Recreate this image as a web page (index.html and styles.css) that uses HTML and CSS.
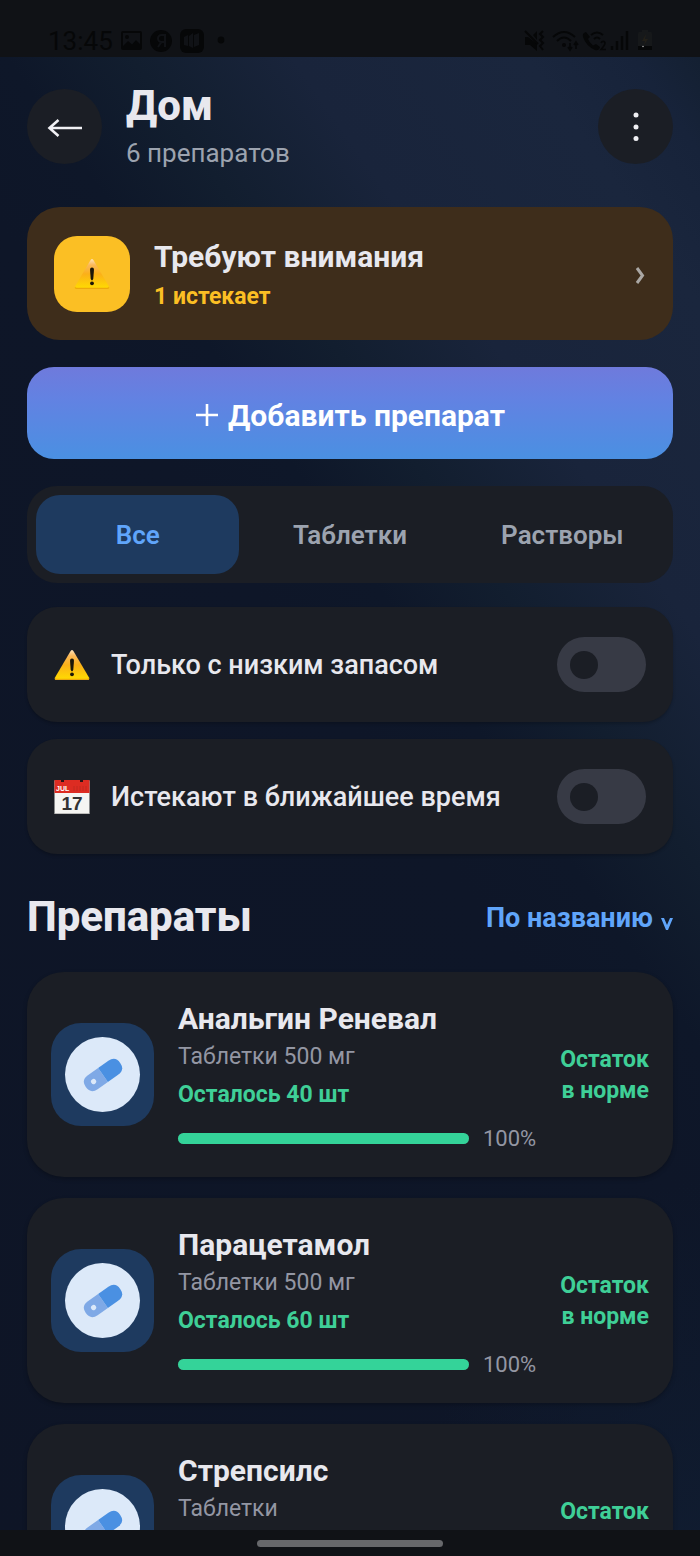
FILE: index.html
```html
<!DOCTYPE html>
<html lang="ru">
<head>
  <meta charset="UTF-8">
  <meta name="viewport" content="width=device-width, initial-scale=1.0">
  <title>Дом</title>
  <link rel="stylesheet" href="styles.css">
</head>
<body>
  <!-- shared shapes -->
  <svg class="sprite" aria-hidden="true">
    <defs>
      <linearGradient id="warn-fill" x1="0" y1="0" x2="0" y2="1">
        <stop offset="0" stop-color="#ffe3b8"/>
        <stop offset="0.2" stop-color="#fbb858"/>
        <stop offset="0.5" stop-color="#fbb018"/>
        <stop offset="1" stop-color="#ffdd00"/>
      </linearGradient>
    </defs>
    <symbol id="warning" viewBox="0 0 36 32">
      <path d="M16.6 2 Q18 0 19.4 2 L35 28.5 Q35.8 31 33.5 31 H2.5 Q0.2 31 1 28.5 Z" fill="url(#warn-fill)"/>
      <path d="M1 28.5 Q0.2 31 2.5 31 H33.5 Q35.8 31 35 28.5 Q34.6 29.8 33 29.8 H3 Q1.4 29.8 1 28.5 Z" fill="#eda80c"/>
      <path d="M16 11.4 Q16 9.6 18 9.6 Q20 9.6 20 11.4 L19.3 20.6 Q19 22.4 18 22.4 Q17 22.4 16.7 20.6 Z" fill="#1c1608"/>
      <circle cx="18" cy="25.3" r="1.9" fill="#1c1608"/>
    </symbol>
    <symbol id="pill" viewBox="0 0 40 34">
      <g transform="rotate(-35 20 17)">
        <path d="M20 8.5 H7.5 Q-1 8.5 -1 17 Q-1 25.5 7.5 25.5 H20 Z" fill="#7fa9e6"/>
        <path d="M20 8.5 H32.5 Q41 8.5 41 17 Q41 25.5 32.5 25.5 H20 Z" fill="#4a90e2"/>
        <circle cx="8.5" cy="17" r="2.6" fill="#dce9f9"/>
      </g>
    </symbol>
  </svg>

  <div class="status-bar">
    <div class="status-left">
      <span>13:45</span>
      <svg width="106" height="24" viewBox="0 0 106 24" fill="currentColor">
        <path fill-rule="evenodd" d="M2 2 H19 Q21 2 21 4 V19 Q21 21 19 21 H2 Q0 21 0 19 V4 Q0 2 2 2 Z M2 4 V17 L7 12 L11 15.5 L15 11 L19 15 V4 Z M4 8 A2 2 0 1 0 8 8 A2 2 0 1 0 4 8 Z"/>
        <circle cx="40" cy="12" r="11"/>
        <path d="M44 18 V6 H40.5 A3.5 3.5 0 0 0 40.5 13 H44 M40.5 13 L37 18" fill="none" stroke="#101216" stroke-width="2"/>
        <rect x="59" y="0" width="24" height="24" rx="6"/>
        <path d="M63 8 L67 6 V17 L63 16 Z M68 7 L72 4 V19 L68 17 Z M73 6 L78 4 V16 L73 18 Z" fill="#101216"/>
        <circle cx="100" cy="11" r="3.4"/>
      </svg>
    </div>
    <svg width="130" height="24" viewBox="0 0 130 24" fill="none" stroke="currentColor" stroke-width="2">
      <path d="M1 8 H4 L13 15 V22 L6 16 H1 Z M9 6 L13 2 V11 Z" fill="currentColor" stroke="none"/>
      <path d="M1 2 L14 15 M19 2 L16 5 L19 8 L16 11 L19 14 L16 17 L19 21"/>
      <path d="M29 8 Q40 -2 51 8 M33 12 Q40 5 47 12"/>
      <circle cx="40" cy="16" r="2" fill="currentColor" stroke="none"/>
      <path d="M46 14 V20 M44 18 L46 21 L48 18 M52 20 V14 M50 16 L52 13 L54 16" stroke-width="1.6"/>
      <path d="M62 3 Q58 4 59 8 Q62 17 71 21 Q75 22 76 18 L72 15 L69 16.5 Q65 13 64 10 L66 8 Z" fill="currentColor" stroke="none"/>
      <path d="M67 6 Q73 1 79 6 M70 10 Q73 7 76 10"/>
      <path d="M77 14 Q78 12 80 12.5 Q83 14 77 20.5 H82" stroke-width="1.6"/>
      <path d="M88 17 V21 M93 12 V21 M98 7 V21 M103 2 V21" stroke-width="2.4"/>
      <path d="M118 1 H124 V3 H127 Q128 3 128 5 V17 H114 V5 Q114 3 115 3 H118 Z" fill="#16181a" stroke="none"/>
      <path d="M122 5 L118 12 H121 L120 16 L124 10 H121 Z" fill="#221f18" stroke="none"/>
      <rect x="114" y="17" width="14" height="4" fill="currentColor" stroke="none"/>
      <circle cx="119" cy="17.5" r="0.8" fill="#aaa" stroke="none"/>
    </svg>
  </div>

  <main class="screen">
    <header class="header">
      <button class="round-btn" aria-label="Назад">
        <svg width="36" height="22" viewBox="0 0 36 22" fill="none" stroke="#f0f0f4" stroke-width="2.6">
          <path d="M35 13 H2 M11.5 5 L2.5 13 L11.5 21"/>
        </svg>
      </button>
      <div class="header-text">
        <h1>Дом</h1>
        <p>6 препаратов</p>
      </div>
      <button class="round-btn" aria-label="Меню">
        <svg width="6" height="30" viewBox="0 0 6 30" fill="#f0f0f4">
          <circle cx="3" cy="4" r="2.5"/>
          <circle cx="3" cy="16" r="2.5"/>
          <circle cx="3" cy="27.5" r="2.5"/>
        </svg>
      </button>
    </header>

    <a class="alert" href="#attention">
      <span class="alert-icon"><svg width="36" height="32"><use href="#warning"/></svg></span>
      <span class="alert-text">
        <strong>Требуют внимания</strong>
        <span>1 истекает</span>
      </span>
      <svg width="12" height="20" viewBox="0 0 12 20" fill="none" stroke="#aaa7a4" stroke-width="3">
        <path d="M3 4 L8.5 11.5 L3 19"/>
      </svg>
    </a>

    <button class="add-btn">
      <svg width="24" height="24" viewBox="0 0 24 24" stroke="#fff" stroke-width="2.6">
        <path d="M12 1 V23 M1 12 H23"/>
      </svg>
      Добавить препарат
    </button>

    <nav class="tabs">
      <button class="tab active">Все</button>
      <button class="tab">Таблетки</button>
      <button class="tab">Растворы</button>
    </nav>

    <div class="filters">
      <label class="filter" for="low-stock">
        <svg width="36" height="32"><use href="#warning"/></svg>
        <span>Только с низким запасом</span>
        <input type="checkbox" class="toggle" id="low-stock">
      </label>
      <label class="filter" for="expiring">
        <svg width="36" height="34" viewBox="0 0 36 34">
          <rect x="0.5" y="0" width="35" height="34" rx="1" fill="#f5f5f2"/>
          <path d="M0.5 0 H35.5 V13 H0.5 Z" fill="#dd2c22"/>
          <path d="M7 0 H10 V2 H7 Z M26 0 H29 V2 H26 Z" fill="#2a1414"/>
          <path d="M20 6 V11 M23 6 V11 M26 6 V11 M29 6 V11 M32 6 V11" stroke="#c2281f"/>
          <path d="M0.5 33.5 H35.5" stroke="#bdbdbb"/>
          <text x="2" y="11" class="cal-month">JUL</text>
          <text x="18" y="30" class="cal-day">17</text>
        </svg>
        <span>Истекают в ближайшее время</span>
        <input type="checkbox" class="toggle" id="expiring">
      </label>
    </div>

    <div class="list-head">
      <h2>Препараты</h2>
      <div class="sort">
        <select aria-label="Сортировка">
          <option>По названию</option>
        </select>
        <svg width="12" height="12" viewBox="0 0 12 12" fill="#60a5fa">
          <path d="M0 0 H3 L6 7 L9 0 H12 L7 12 H5 Z"/>
        </svg>
      </div>
    </div>

    <ul class="meds">
      <li class="med">
        <div class="med-icon"><span><svg width="40" height="34"><use href="#pill"/></svg></span></div>
        <div class="med-info">
          <h3>Анальгин Реневал</h3>
          <p class="med-type">Таблетки 500 мг</p>
          <p class="med-left">Осталось 40 шт</p>
          <div class="stock">
            <div class="bar"><div class="bar-fill" style="width: 100%"></div></div>
            <span>100%</span>
          </div>
        </div>
        <p class="med-status">Остаток<br>в норме</p>
      </li>
      <li class="med">
        <div class="med-icon"><span><svg width="40" height="34"><use href="#pill"/></svg></span></div>
        <div class="med-info">
          <h3>Парацетамол</h3>
          <p class="med-type">Таблетки 500 мг</p>
          <p class="med-left">Осталось 60 шт</p>
          <div class="stock">
            <div class="bar"><div class="bar-fill" style="width: 100%"></div></div>
            <span>100%</span>
          </div>
        </div>
        <p class="med-status">Остаток<br>в норме</p>
      </li>
      <li class="med">
        <div class="med-icon"><span><svg width="40" height="34"><use href="#pill"/></svg></span></div>
        <div class="med-info">
          <h3>Стрепсилс</h3>
          <p class="med-type">Таблетки</p>
          <p class="med-left">&nbsp;</p>
          <div class="stock">
            <div class="bar"><div class="bar-fill" style="width: 100%"></div></div>
          </div>
        </div>
        <p class="med-status">Остаток<br>&nbsp;</p>
      </li>
    </ul>
  </main>

  <div class="nav-bar"><span></span></div>
</body>
</html>
```

FILE: styles.css
```css
*, *::before, *::after {
  box-sizing: border-box;
}
body {
  margin: 0;
  height: 100vh;
  display: flex;
  flex-direction: column;
  overflow: hidden;
  font-family: Roboto, "Noto Sans", sans-serif;
  color: #e8e8ee;
  background:
    radial-gradient(ellipse 40% 24% at 100% 100%, #101c30, rgba(16, 28, 48, 0)),
    linear-gradient(55deg, #0e1526 0%, #0e1628 52%, #0e1729 59%, #121e2f 66%, #19243b 75%, #1a263d 88%, #17233a 94%, #121e2d 100%);
}
h1, h2, h3, p, ul {
  margin: 0;
  padding: 0;
}
button, select {
  font-family: inherit;
  color: inherit;
  border: none;
  background: none;
  padding: 0;
  cursor: pointer;
}
svg {
  flex-shrink: 0;
}
.sprite {
  position: absolute;
  width: 0;
  height: 0;
}

/* system bars */
.status-bar {
  flex: none;
  display: flex;
  justify-content: space-between;
  align-items: flex-end;
  height: 57px;
  padding: 0 46px 4px 48px;
  background: #101216;
  color: #060708;
}
.status-left {
  display: flex;
  align-items: center;
  gap: 8px;
  font-size: 26px;
  line-height: 24px;
}
.nav-bar {
  flex: none;
  display: flex;
  justify-content: center;
  align-items: center;
  height: 26px;
  background: #101216;
}
.nav-bar span {
  width: 186px;
  height: 7px;
  border-radius: 4px;
  background: #67686b;
}

.screen {
  flex: 1;
  min-height: 0;
  overflow: hidden;
  padding: 24px 27px 0;
}

/* header */
.header {
  display: flex;
  align-items: center;
  gap: 24px;
  margin-bottom: 36px;
}
.header-text {
  flex: 1;
}
.header h1 {
  font-size: 42px;
  font-weight: 800;
  line-height: 50px;
}
.header p {
  margin-top: 4px;
  font-size: 26px;
  line-height: 36px;
  color: #9ca3af;
}
.round-btn {
  display: flex;
  justify-content: center;
  align-items: center;
  width: 75px;
  height: 75px;
  border-radius: 50%;
  background: #1b1e25;
}

/* alert */
.alert {
  display: flex;
  align-items: center;
  gap: 24px;
  height: 133px;
  padding: 0 27px;
  border-radius: 33px;
  background: #3e2d1b;
  color: inherit;
  text-decoration: none;
}
.alert-icon {
  display: flex;
  justify-content: center;
  align-items: center;
  width: 76px;
  height: 76px;
  border-radius: 23px;
  background: #fbbf24;
}
.alert-text {
  flex: 1;
  display: flex;
  flex-direction: column;
  gap: 4px;
}
.alert-text strong {
  font-size: 30px;
  font-weight: 700;
  line-height: 42px;
}
.alert-text span {
  font-size: 23px;
  font-weight: 700;
  line-height: 30px;
  color: #fbbf24;
}

.add-btn {
  display: flex;
  justify-content: center;
  align-items: center;
  gap: 9px;
  width: 100%;
  height: 92px;
  margin: 27px 0;
  padding-top: 4px;
  border-radius: 27px;
  background: linear-gradient(#6f7adc, #6282e2 35%, #4a90e2);
  color: #fff;
  font-size: 30px;
  font-weight: 700;
}

/* tabs */
.tabs {
  display: grid;
  grid-template-columns: repeat(3, 1fr);
  gap: 9px;
  padding: 9px;
  border-radius: 30px;
  background: #1b1e25;
}
.tab {
  height: 79px;
  border-radius: 24px;
  color: #9ca3af;
  font-size: 26px;
  font-weight: 600;
}
.tab.active {
  background: #1e3a5f;
  color: #60a5fa;
}

/* filters */
.filters {
  display: flex;
  flex-direction: column;
  gap: 17px;
  margin-top: 24px;
}
.filter {
  display: flex;
  align-items: center;
  gap: 21px;
  height: 115px;
  padding: 0 27px;
  border-radius: 30px;
  background: #1b1e25;
  box-shadow: 0 2px 3px rgba(0, 0, 0, 0.2);
  font-size: 27px;
  font-weight: 500;
}
.filter span {
  flex: 1;
}
.toggle {
  appearance: none;
  display: flex;
  align-items: center;
  width: 89px;
  height: 55px;
  margin: 0;
  padding: 0 13px;
  border-radius: 28px;
  background: #373a45;
}
.toggle::before {
  content: "";
  width: 28px;
  height: 28px;
  border-radius: 50%;
  background: #1b1e25;
}
.toggle:checked {
  justify-content: flex-end;
  background: #60a5fa;
}
.cal-month {
  font: 700 7px "Liberation Sans", sans-serif;
  fill: #fff;
}
.cal-day {
  font: 700 19px "Liberation Sans", sans-serif;
  fill: #333;
  text-anchor: middle;
}

/* list */
.list-head {
  display: flex;
  justify-content: space-between;
  align-items: center;
  margin: 38px 0 30px;
}
.list-head h2 {
  font-size: 42px;
  font-weight: 800;
  line-height: 50px;
}
.sort {
  display: flex;
  align-items: center;
  gap: 8px;
  padding-top: 2px;
  color: #60a5fa;
}
.sort select {
  appearance: none;
  font-size: 27px;
  font-weight: 700;
}
.sort svg {
  margin-top: 12px;
}
.meds {
  display: flex;
  flex-direction: column;
  gap: 21px;
  list-style: none;
}
.med {
  display: flex;
  align-items: center;
  gap: 24px;
  height: 205px;
  padding: 0 24px;
  border-radius: 37px;
  background: #1b1e25;
  box-shadow: 0 2px 4px rgba(0, 0, 0, 0.25);
}
.med-icon {
  display: flex;
  justify-content: center;
  align-items: center;
  width: 103px;
  height: 103px;
  border-radius: 30px;
  background: #1e3a5f;
}
.med-icon span {
  display: flex;
  justify-content: center;
  align-items: center;
  width: 75px;
  height: 75px;
  border-radius: 50%;
  background: #dce9f9;
}
.med-info {
  flex: 1;
  padding-top: 3px;
  line-height: 38px;
}
.med h3 {
  font-size: 30px;
  font-weight: 700;
  line-height: 38px;
}
.med-type {
  font-size: 23px;
  color: #9396a3;
}
.med-left {
  font-size: 23px;
  font-weight: 700;
  color: #3fcf97;
}
.stock {
  display: flex;
  align-items: center;
  gap: 14px;
  height: 27px;
  margin-top: 11px;
  font-size: 22px;
  color: #9396a3;
}
.bar {
  flex: 1;
  height: 11px;
  border-radius: 6px;
  background: #373a45;
}
.bar-fill {
  height: 100%;
  border-radius: 6px;
  background: #34d399;
}
.med-status {
  font-size: 23px;
  font-weight: 700;
  line-height: 31px;
  text-align: right;
  color: #3fcf97;
}
```
